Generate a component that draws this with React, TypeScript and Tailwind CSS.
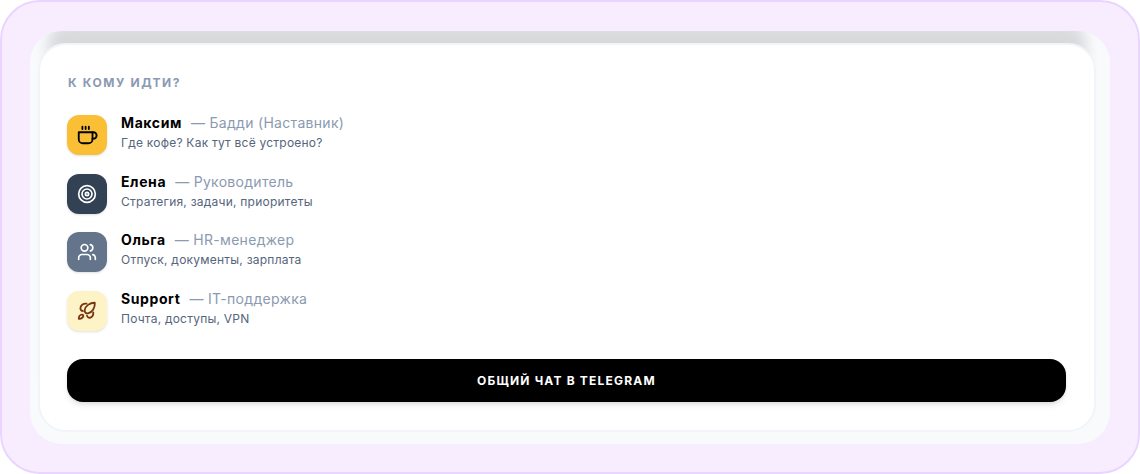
import { Target, Users } from 'lucide-react'

type IconProps = { size: number }

function Cup({ size }: IconProps) {
  return (
    <svg width={size + 2} height={size + 2} viewBox="0 0 24 24" fill="none" stroke="currentColor" strokeWidth="2" strokeLinecap="round" strokeLinejoin="round">
      <path d="M18 9h1a3.500 3.500 0 1 1 0 7h-1" />
      <path d="M3 9h15v7.500a4.500 4.500 0 0 1-4.500 4.500h-6A4.500 4.500 0 0 1 3 16.500Z" />
      <path d="M7 3v2.500M10.500 3v2.500M14 3v2.500" />
    </svg>
  )
}

function Leaves({ size }: IconProps) {
  return (
    <svg width={size + 2} height={size + 2} viewBox="0 0 24 24" fill="none" stroke="currentColor" strokeWidth="2" strokeLinecap="round" strokeLinejoin="round">
      <path d="M20.500 3C15 3 10 6.500 9.500 11c-.3 2.500 1.500 4 3.500 3.500 5-1 8-6.500 7.500-11.500Z" />
      <path d="M11.500 4C8 3.500 4.500 6 4.800 9.500 5 11 6 12 7.500 12" />
      <path d="M12 17c.5 2.500 3 3 5 1.500 1.500-1 2-3 1.800-5" />
      <path d="M3 20.500c0-2.500 1.500-4.500 3.500-4.500 1.500 0 2 1.500 1 2.700-1 1.300-3 2.100-4.500 1.800Z" />
    </svg>
  )
}

const people = [
  { name: 'Максим', role: '— Бадди (Наставник)', hint: 'Где кофе? Как тут всё устроено?', box: 'bg-[#fbbf36] text-black', Icon: Cup },
  { name: 'Елена', role: '— Руководитель', hint: 'Стратегия, задачи, приоритеты', box: 'bg-[#334155] text-white', Icon: Target },
  { name: 'Ольга', role: '— HR-менеджер', hint: 'Отпуск, документы, зарплата', box: 'bg-[#64748b] text-white', Icon: Users },
  { name: 'Support', role: '— IT-поддержка', hint: 'Почта, доступы, VPN', box: 'bg-[#fef3c7] text-[#78350f]', Icon: Leaves },
]

export default function App() {
  return (
    <div className="h-[474px] w-[1140px] overflow-hidden bg-white font-['Inter',sans-serif]">
      <div className="h-full rounded-[40px] border-2 border-[#e9d5ff] bg-[#f8edff] pb-7 pl-7 pr-7 pt-[29px]">
        <div className="h-full overflow-hidden rounded-[32px] bg-[#f9fafb] pb-3 pl-2 pr-3.5 pt-3">
          <div className="flex h-full flex-col rounded-[28px] border-2 border-[#f1f5f9] bg-white pl-[27px] pr-[28px] pt-[30px] shadow-[0_-30px_14px_-10px_rgba(0,0,0,0.13)]">
            <h3 className="pl-px text-xs font-bold leading-4 tracking-[1.6px] text-[#8b9ab1]">К КОМУ ИДТИ?</h3>
            <ul className="mt-6 flex flex-col gap-[18.67px]">
              {people.map(({ name, role, hint, box, Icon }) => (
                <li key={name} className="flex items-start gap-3.5">
                  <div className={`flex h-10 w-10 items-center justify-center rounded-xl shadow-sm ${box}`}>
                    <Icon size={20} />
                  </div>
                  <div>
                    <div className="flex h-4 items-center gap-[9px] text-sm">
                      <span className="font-bold tracking-[0.6px] text-black">{name}</span>
                      <span className="tracking-[0.3px] text-[#8b9ab1]">{role}</span>
                    </div>
                    <div className="mt-[3px] text-xs leading-[18px] tracking-[0.23px] text-[#56657c]">{hint}</div>
                  </div>
                </li>
              ))}
            </ul>
            <button className="mt-7 h-[43px] w-full rounded-2xl bg-black pt-px text-xs font-bold tracking-[0.1em] text-white shadow-md">
              ОБЩИЙ ЧАТ В TELEGRAM
            </button>
          </div>
        </div>
      </div>
    </div>
  )
}
